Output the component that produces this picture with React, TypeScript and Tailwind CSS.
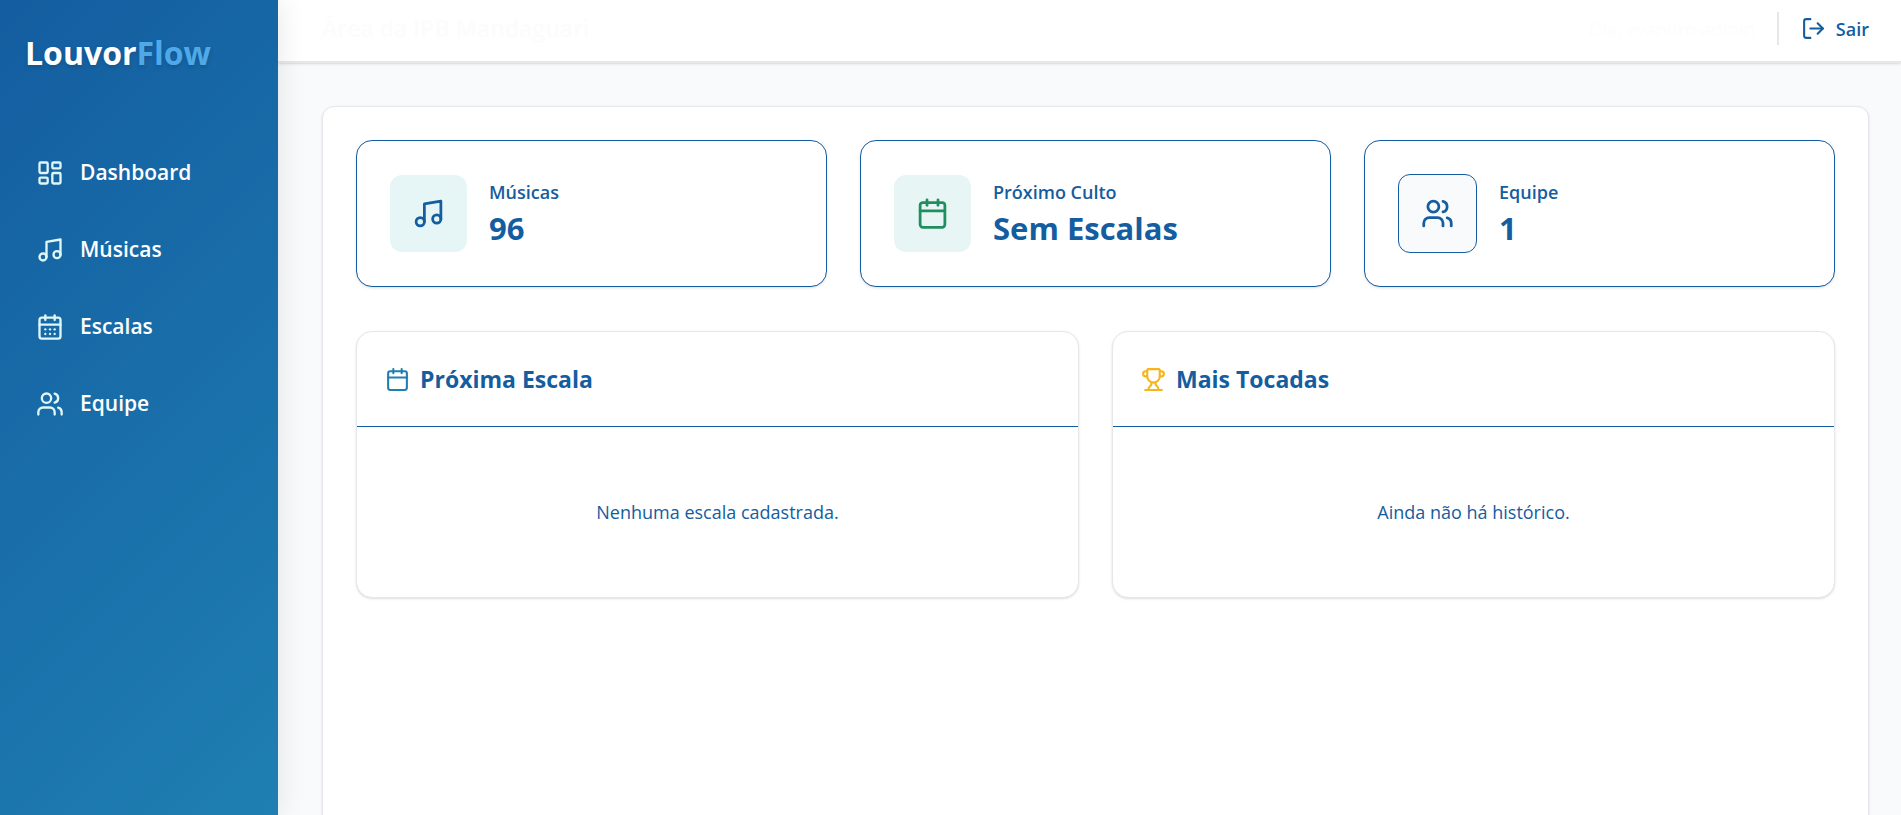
import React from 'react';
import { Calendar, CalendarDays, LayoutDashboard, LogOut, Music, Trophy, Users } from 'lucide-react';
import type { LucideIcon } from 'lucide-react';

interface NavItem {
  label: string;
  icon: LucideIcon;
}

const NAV_ITEMS: NavItem[] = [
  { label: 'Dashboard', icon: LayoutDashboard },
  { label: 'Músicas', icon: Music },
  { label: 'Escalas', icon: CalendarDays },
  { label: 'Equipe', icon: Users },
];

function Sidebar() {
  return (
    <aside className="relative z-20 w-[278px] shrink-0 bg-linear-135 from-[#145da0] to-[#1f7fb2] shadow-[4px_0_24px_rgba(0,0,0,0.08)]">
      <div className="px-[25px] pt-[31px] text-[32px] leading-11 font-bold text-white [text-shadow:0_2px_4px_rgba(0,0,0,0.15)]">
        Louvor<span className="text-[#4fa9e8]">Flow</span>
      </div>
      <nav className="mt-[70px] flex flex-col gap-[22px] px-[14px]">
        {NAV_ITEMS.map(({ label, icon: Icon }) => (
          <a key={label} href="#" className="flex h-[55px] items-center gap-4 px-[22px] text-[21px] font-semibold text-white">
            <Icon size={28} strokeWidth={2} className="text-[#e0f7f7]" />
            {label}
          </a>
        ))}
      </nav>
    </aside>
  );
}

function Header() {
  return (
    <header className="relative z-10 flex h-[63px] shrink-0 items-center justify-between border-b-2 border-[#e5e7eb] bg-white pr-8 pb-1 pl-11 shadow-sm">
      <h1 className="text-[23px] font-semibold text-[#fcfcfd]">Área da IPB Mandaguari</h1>
      <div className="flex items-center">
        <span className="text-lg text-[#fdfdfe]">Olá, evandro-admin</span>
        <button type="button" className="ml-[22px] flex h-[33px] items-center gap-[10px] border-l-2 border-[#e5e7eb] pl-[22px] text-lg font-semibold text-[#145da0]">
          <LogOut size={25} strokeWidth={2} />
          Sair
        </button>
      </div>
    </header>
  );
}

interface StatCardProps {
  label: string;
  value: string;
  icon: LucideIcon;
  tileClass: string;
}

function StatCard({ label, value, icon: Icon, tileClass }: StatCardProps) {
  return (
    <div className="flex h-[147px] items-center gap-[22px] rounded-2xl border border-[#145da0] bg-white px-[33px] shadow-sm">
      <div className={`flex items-center justify-center rounded-xl p-[22px] ${tileClass}`}>
        <Icon size={33} strokeWidth={2} />
      </div>
      <div className="text-[#145da0]">
        <p className="text-lg leading-7 font-semibold">{label}</p>
        <p className="text-[31px] leading-11 font-bold">{value}</p>
      </div>
    </div>
  );
}

interface PanelProps {
  title: string;
  icon: LucideIcon;
  iconClass: string;
  message: string;
}

function Panel({ title, icon: Icon, iconClass, message }: PanelProps) {
  return (
    <section className="flex flex-col overflow-hidden rounded-2xl border border-[#e5e7eb] bg-white text-[#145da0] shadow">
      <header className="flex h-[95px] items-center gap-[10px] border-b border-[#145da0] px-7">
        <Icon size={25} strokeWidth={2} className={iconClass} />
        <h2 className="text-[23px] font-bold">{title}</h2>
      </header>
      <p className="flex h-[170px] items-center justify-center text-lg">{message}</p>
    </section>
  );
}

export default function App() {
  return (
    <div className="flex h-screen overflow-hidden bg-[#f8fafc] font-['Open_Sans','Noto_Sans',sans-serif]">
      <Sidebar />
      <div className="flex min-w-0 flex-1 flex-col">
        <Header />
        <main className="flex-1 overflow-hidden px-8 pt-[43px] pl-11">
          <div className="min-h-screen rounded-xl border border-[#e5e7eb] bg-white p-[33px] shadow">
            <div className="grid grid-cols-3 gap-[33px]">
              <StatCard label="Músicas" value="96" icon={Music} tileClass="bg-[#e6f6f7] text-[#145da0]" />
              <StatCard label="Próximo Culto" value="Sem Escalas" icon={Calendar} tileClass="bg-[#e7f5f5] text-[#1f8f5f]" />
              <StatCard label="Equipe" value="1" icon={Users} tileClass="border border-[#145da0] bg-[#f8fafc] text-[#145da0]" />
            </div>
            <div className="mt-11 grid grid-cols-2 gap-[33px]">
              <Panel title="Próxima Escala" icon={Calendar} iconClass="text-[#1f7fb2]" message="Nenhuma escala cadastrada." />
              <Panel title="Mais Tocadas" icon={Trophy} iconClass="text-[#f5b51b]" message="Ainda não há histórico." />
            </div>
          </div>
        </main>
      </div>
    </div>
  );
}
